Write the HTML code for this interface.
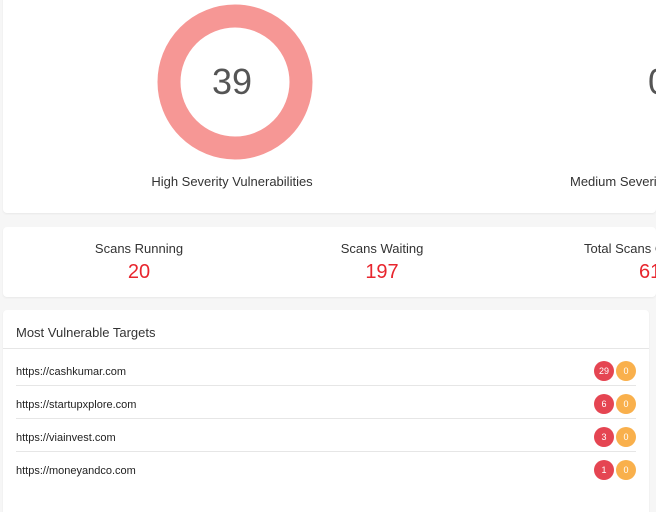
<!DOCTYPE html><html><head><style>
html,body{margin:0;width:656px;height:512px;overflow:hidden}
body{background:#f6f6f6;font-family:"Liberation Sans",sans-serif;position:relative}
.card{position:absolute;background:#fff;border-radius:4px;box-shadow:0 1px 2px rgba(0,0,0,.06);overflow:hidden}
.t{position:absolute;color:#333;white-space:nowrap}
.c{transform:translateX(-50%)}
.num{color:#e8262e;font-size:20px}
.row{position:absolute;left:16px;width:620px;height:33px;border-bottom:1px solid #e6e6e6;font-size:11px;color:#222}
.row span{position:absolute;left:0;top:14px}
.b{position:absolute;top:9px;width:20px;height:20px;border-radius:50%;color:#fff;font-size:9px;text-align:center;line-height:20px}
.r{left:578px;background:#e54552}.o{left:600px;background:#f9b04c}
</style></head><body>
<div class="card" style="left:3px;top:-10px;width:653px;height:223px">
<svg style="position:absolute;left:150px;top:8px" width="164" height="164"><circle cx="82" cy="84" r="66" fill="none" stroke="#f69795" stroke-width="23"/></svg>
<div class="t c" style="left:229px;top:71px;font-size:36px;color:#555">39</div>
<div class="t c" style="left:229px;top:184px;font-size:13px">High Severity Vulnerabilities</div>
<div class="t" style="left:567px;top:184px;font-size:13px">Medium Severity Vulnerabilities</div>
<div class="t" style="left:645px;top:71px;font-size:36px;color:#555">0</div>
</div>
<div class="card" style="left:3px;top:227px;width:653px;height:70px">
<div class="t c" style="left:136px;top:14px;font-size:13px">Scans Running</div>
<div class="t c num" style="left:136px;top:34px">20</div>
<div class="t c" style="left:379px;top:14px;font-size:13px">Scans Waiting</div>
<div class="t c num" style="left:379px;top:34px">197</div>
<div class="t" style="left:581px;top:14px;font-size:13px">Total Scans Completed</div>
<div class="t num" style="left:636px;top:34px">61</div>
</div>
<div class="card" style="left:3px;top:310px;width:646px;height:220px">
<div style="position:absolute;left:0;top:0;width:646px;height:38px;border-bottom:1px solid #e6e6e6"></div>
<div class="t" style="left:13px;top:15px;font-size:13px">Most Vulnerable Targets</div>
</div>
<div class="row" style="top:352px"><span>https://cashkumar.com</span><div class="b r">29</div><div class="b o">0</div></div>
<div class="row" style="top:385px"><span>https://startupxplore.com</span><div class="b r">6</div><div class="b o">0</div></div>
<div class="row" style="top:418px"><span>https://viainvest.com</span><div class="b r">3</div><div class="b o">0</div></div>
<div class="row" style="top:451px;border:none"><span>https://moneyandco.com</span><div class="b r">1</div><div class="b o">0</div></div>
</body></html>
